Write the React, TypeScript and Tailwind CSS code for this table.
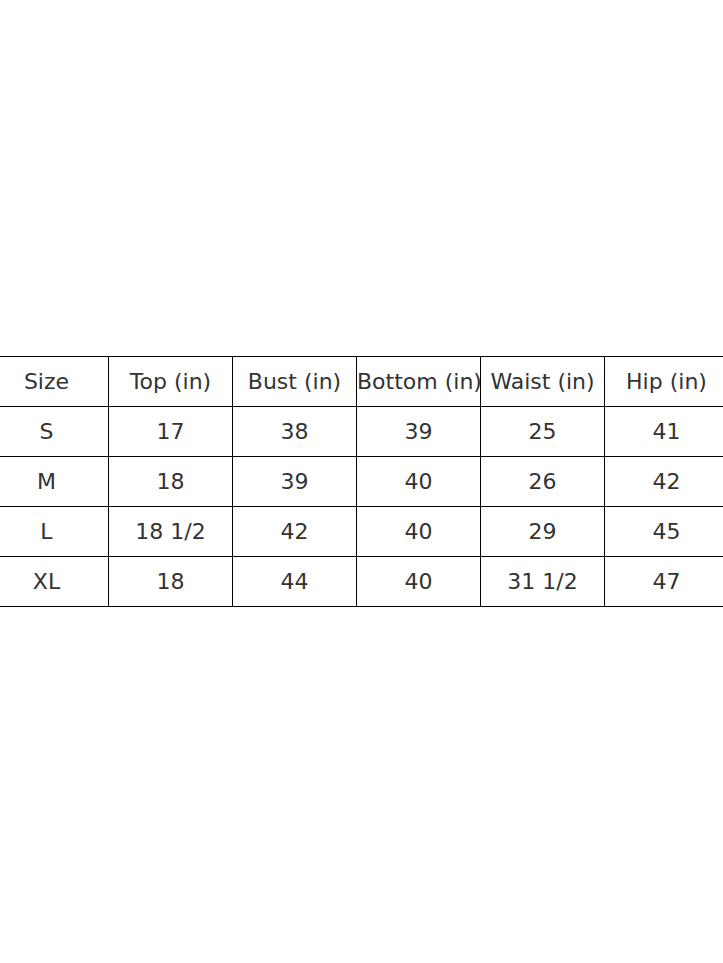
import React from 'react'

const headers = ['Size', 'Top (in)', 'Bust (in)', 'Bottom (in)', 'Waist (in)', 'Hip (in)']

const rows = [
  ['S', '17', '38', '39', '25', '41'],
  ['M', '18', '39', '40', '26', '42'],
  ['L', '18 1/2', '42', '40', '29', '45'],
  ['XL', '18', '44', '40', '31 1/2', '47'],
]

export default function App() {
  return (
    <div className="h-[963px] w-[723px] overflow-hidden bg-white flex items-center">
      <table
        className="table-fixed border-collapse w-[745px] shrink-0 -ml-[16px] text-[22px] leading-none text-[#333333]"
        style={{ fontFamily: '"DejaVu Sans", sans-serif' }}
      >
        <tbody>
          <tr>
            {headers.map((h) => (
              <td key={h} className="h-[50px] border border-black text-center whitespace-nowrap p-0">
                {h}
              </td>
            ))}
          </tr>
          {rows.map((r, i) => (
            <tr key={i}>
              {r.map((c, j) => (
                <td key={j} className="h-[50px] border border-black text-center whitespace-nowrap p-0">
                  {c}
                </td>
              ))}
            </tr>
          ))}
        </tbody>
      </table>
    </div>
  )
}
